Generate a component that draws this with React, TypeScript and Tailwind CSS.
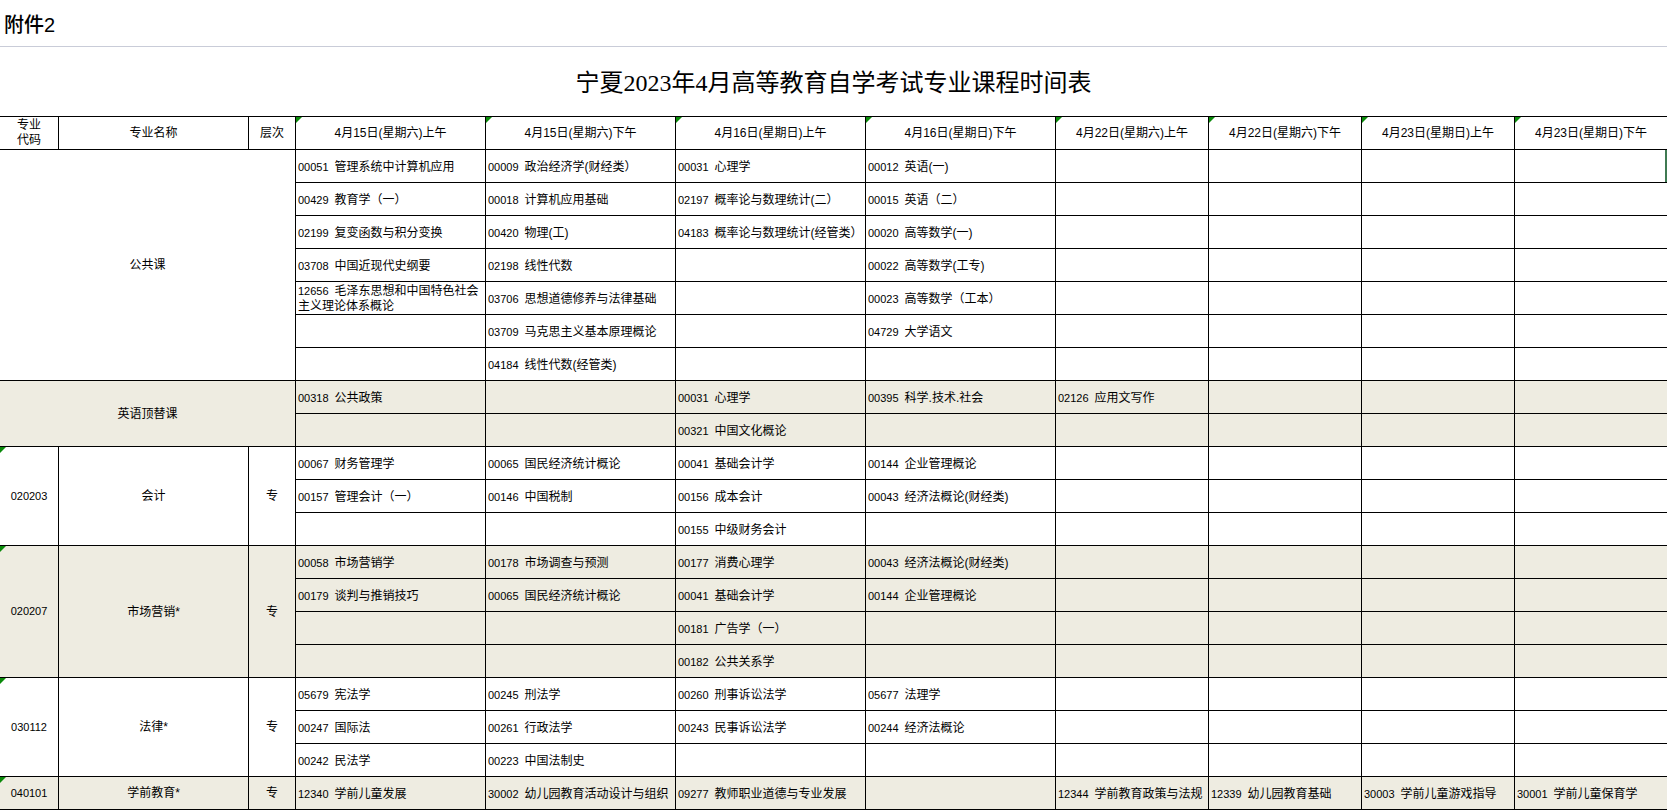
import React from "react";

type Group = {
  code: string;
  name: string;
  level: string;
  shaded: boolean;
  merged?: boolean; // name spans first 3 columns
  mark?: boolean;
  rows: string[][];
};

const groups: Group[] = [
  {
    code: "",
    name: "公共课",
    level: "",
    shaded: false,
    merged: true,
    rows: [
      ["00051 管理系统中计算机应用", "00009 政治经济学(财经类）", "00031 心理学", "00012 英语(一)", "", "", "", ""],
      ["00429 教育学（一）", "00018 计算机应用基础", "02197 概率论与数理统计(二）", "00015 英语（二）", "", "", "", ""],
      ["02199 复变函数与积分变换", "00420 物理(工)", "04183 概率论与数理统计(经管类）", "00020 高等数学(一)", "", "", "", ""],
      ["03708 中国近现代史纲要", "02198 线性代数", "", "00022 高等数学(工专)", "", "", "", ""],
      ["12656 毛泽东思想和中国特色社会|主义理论体系概论", "03706 思想道德修养与法律基础", "", "00023 高等数学（工本）", "", "", "", ""],
      ["", "03709 马克思主义基本原理概论", "", "04729 大学语文", "", "", "", ""],
      ["", "04184 线性代数(经管类)", "", "", "", "", "", ""],
    ],
  },
  {
    code: "",
    name: "英语顶替课",
    level: "",
    shaded: true,
    merged: true,
    rows: [
      ["00318 公共政策", "", "00031 心理学", "00395 科学.技术.社会", "02126 应用文写作", "", "", ""],
      ["", "", "00321 中国文化概论", "", "", "", "", ""],
    ],
  },
  {
    code: "020203",
    name: "会计",
    level: "专",
    shaded: false,
    mark: true,
    rows: [
      ["00067 财务管理学", "00065 国民经济统计概论", "00041 基础会计学", "00144 企业管理概论", "", "", "", ""],
      ["00157 管理会计（一）", "00146 中国税制", "00156 成本会计", "00043 经济法概论(财经类)", "", "", "", ""],
      ["", "", "00155 中级财务会计", "", "", "", "", ""],
    ],
  },
  {
    code: "020207",
    name: "市场营销*",
    level: "专",
    shaded: true,
    mark: true,
    rows: [
      ["00058 市场营销学", "00178 市场调查与预测", "00177 消费心理学", "00043 经济法概论(财经类)", "", "", "", ""],
      ["00179 谈判与推销技巧", "00065 国民经济统计概论", "00041 基础会计学", "00144 企业管理概论", "", "", "", ""],
      ["", "", "00181 广告学（一）", "", "", "", "", ""],
      ["", "", "00182 公共关系学", "", "", "", "", ""],
    ],
  },
  {
    code: "030112",
    name: "法律*",
    level: "专",
    shaded: false,
    mark: true,
    rows: [
      ["05679 宪法学", "00245 刑法学", "00260 刑事诉讼法学", "05677 法理学", "", "", "", ""],
      ["00247 国际法", "00261 行政法学", "00243 民事诉讼法学", "00244 经济法概论", "", "", "", ""],
      ["00242 民法学", "00223 中国法制史", "", "", "", "", "", ""],
    ],
  },
  {
    code: "040101",
    name: "学前教育*",
    level: "专",
    shaded: true,
    mark: true,
    rows: [
      [
        "12340 学前儿童发展",
        "30002 幼儿园教育活动设计与组织",
        "09277 教师职业道德与专业发展",
        "",
        "12344 学前教育政策与法规",
        "12339 幼儿园教育基础",
        "30003 学前儿童游戏指导",
        "30001 学前儿童保育学",
      ],
    ],
  },
];

const headers = [
  "4月15日(星期六)上午",
  "4月15日(星期六)下午",
  "4月16日(星期日)上午",
  "4月16日(星期日)下午",
  "4月22日(星期六)上午",
  "4月22日(星期六)下午",
  "4月23日(星期日)上午",
  "4月23日(星期日)下午",
];

const spanClass: Record<number, string> = {
  1: "row-span-1",
  2: "row-span-2",
  3: "row-span-3",
  4: "row-span-4",
  7: "row-span-7",
};

const FONT = "font-['Liberation_Sans','Noto_Sans_CJK_SC',sans-serif]";

function Mark() {
  return (
    <svg className="absolute left-0 top-0" width="6" height="6" viewBox="0 0 6 6">
      <polygon points="0,0 6,0 0,6" fill="#0a8a0a" />
    </svg>
  );
}

function CourseText({ text }: { text: string }) {
  if (!text) return null;
  const idx = text.indexOf(" ");
  const code = text.slice(0, idx);
  const name = text.slice(idx + 1);
  const parts = name.split("|");
  if (parts.length > 1) {
    return (
      <div className="leading-[15px]">
        <div>
          <span className="text-[11px]">{code}</span>
          <span className="ml-[6px] text-[12px]">{parts[0]}</span>
        </div>
        <div className="text-[12px]">{parts[1]}</div>
      </div>
    );
  }
  return (
    <span className="whitespace-nowrap">
      <span className="text-[11px]">{code}</span>
      <span className="ml-[6px] text-[12px]">{name}</span>
    </span>
  );
}

export default function App() {
  const cells: React.ReactNode[] = [];

  // Header row
  cells.push(
    <div key="h1" className="border-r border-b border-black flex flex-col items-center justify-center text-[12px] leading-[15px]">
      <span>专业</span>
      <span>代码</span>
    </div>
  );
  cells.push(
    <div key="h2" className="border-r border-b border-black flex items-center justify-center text-[12px]">
      专业名称
    </div>
  );
  cells.push(
    <div key="h3" className="border-r border-b border-black flex items-center justify-center text-[12px]">
      层次
    </div>
  );
  headers.forEach((h, i) => {
    cells.push(
      <div
        key={"hd" + i}
        className={
          "relative border-b border-black flex items-center justify-center text-[12px] whitespace-nowrap " +
          (i === headers.length - 1 ? "" : "border-r")
        }
      >
        <Mark />
        {h}
      </div>
    );
  });

  groups.forEach((g, gi) => {
    const n = g.rows.length;
    const bg = g.shaded ? "bg-[#eeece1]" : "bg-white";
    const span = spanClass[n];
    if (g.merged) {
      cells.push(
        <div
          key={"g" + gi + "m"}
          className={`col-span-3 ${span} ${bg} border-r border-b border-black flex items-center justify-center text-[12px]`}
        >
          {g.name}
        </div>
      );
    } else {
      cells.push(
        <div
          key={"g" + gi + "c"}
          className={`relative ${span} ${bg} border-r border-b border-black flex items-center justify-center text-[11px]`}
        >
          {g.mark && <Mark />}
          {g.code}
        </div>
      );
      cells.push(
        <div
          key={"g" + gi + "n"}
          className={`${span} ${bg} border-r border-b border-black flex items-center justify-center text-[12px]`}
        >
          {g.name}
        </div>
      );
      cells.push(
        <div
          key={"g" + gi + "l"}
          className={`${span} ${bg} border-r border-b border-black flex items-center justify-center text-[12px]`}
        >
          {g.level}
        </div>
      );
    }
    g.rows.forEach((row, ri) => {
      row.forEach((c, ci) => {
        const last = ci === row.length - 1;
        cells.push(
          <div
            key={`g${gi}r${ri}c${ci}`}
            className={`relative ${bg} border-b border-black ${last ? "" : "border-r"} flex items-center pl-[2px] overflow-hidden`}
          >
            <CourseText text={c} />
            {gi === 0 && ri === 0 && last && (
              <span className="absolute right-0 top-0 bottom-0 w-[2px] bg-[#3f7a52]" />
            )}
          </div>
        );
      });
    });
  });

  return (
    <div className={`w-[1667px] h-[810px] overflow-hidden bg-white text-black ${FONT}`}>
      <div className="h-[47px] border-b border-[#c9ccd8] flex items-center pl-[4px] pt-[3px]">
        <span className="text-[20px] font-medium leading-none">附件2</span>
      </div>
      <div className="h-[69px] flex items-center justify-center pt-[2px]">
        <span className="text-[24px] leading-none font-['Liberation_Serif','Noto_Sans_CJK_SC',serif]">
          宁夏2023年4月高等教育自学考试专业课程时间表
        </span>
      </div>
      <div className="grid grid-cols-[59px_190px_47px_190px_190px_190px_190px_153px_153px_153px_152px] grid-rows-[repeat(21,33px)] border-t border-black">
        {cells}
      </div>
    </div>
  );
}
